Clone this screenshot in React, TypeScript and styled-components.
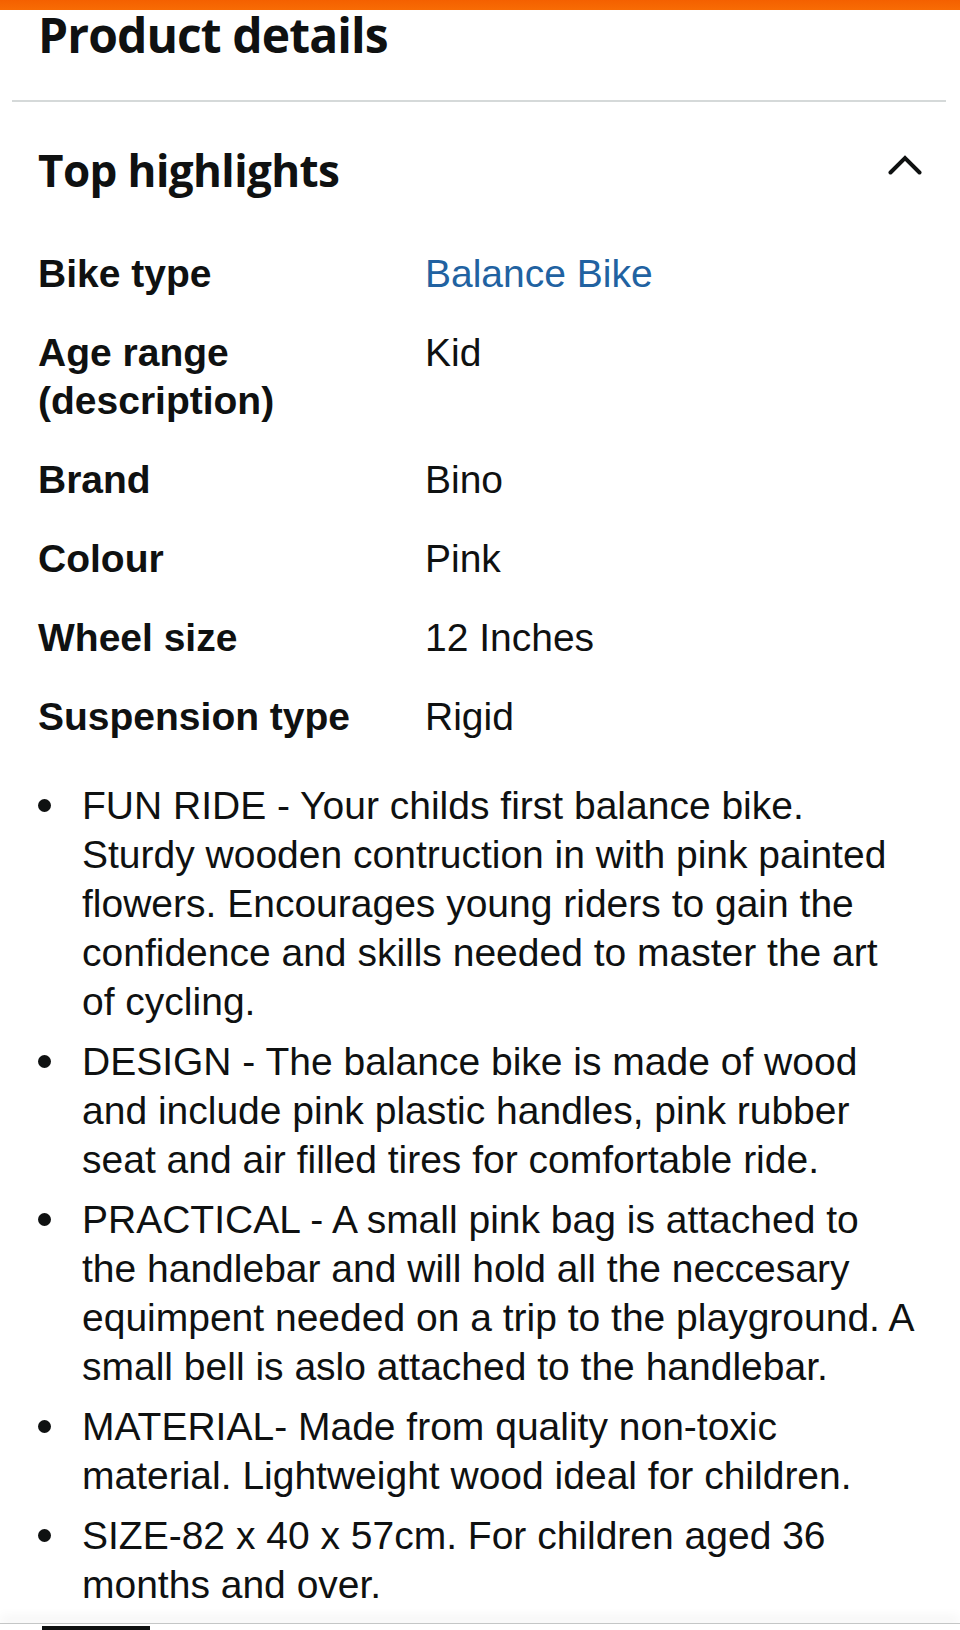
import React from "react";
import styled, { createGlobalStyle } from "styled-components";

const GlobalStyle = createGlobalStyle`
  html, body {
    margin: 0;
    padding: 0;
    background: #ffffff;
  }
  body {
    font-family: "Liberation Sans", Arial, sans-serif;
    color: #0f1111;
    -webkit-font-smoothing: antialiased;
  }
  * { box-sizing: border-box; }
`;

const Page = styled.div`
  width: 960px;
  min-height: 1630px;
  background: #fff;
  padding-bottom: 40px;
`;

const TopBar = styled.div`
  height: 10px;
  background: linear-gradient(#f46000, #f86c04);
`;

const Container = styled.div`
  padding: 0 12px;
`;

const Title = styled.h1`
  margin: 0;
  padding: 1px 26px 0;
  font-family: "Open Sans", "Noto Sans", sans-serif;
  font-weight: 700;
  font-size: 48px;
  line-height: 48px;
  letter-spacing: -0.9px;
  color: #0f1111;
`;

const Divider = styled.hr`
  margin: 41px 2px 0 0;
  border: none;
  height: 2px;
  background: #d5d9d9;
`;

const Section = styled.section`
  padding: 0 31px 0 26px;
`;

const SectionHeader = styled.div`
  margin-top: 40px;
  margin-right: -5px;
  display: flex;
  justify-content: space-between;
  align-items: flex-start;
`;

const SectionTitle = styled.h2`
  margin: 0;
  font-family: "Open Sans", "Noto Sans", sans-serif;
  font-weight: 700;
  font-size: 44px;
  line-height: 56px;
  letter-spacing: -0.6px;
  color: #0f1111;
`;

const Chevron = styled.svg`
  display: block;
  width: 34px;
  height: 20px;
  margin-top: 13px;
`;

const SpecTable = styled.dl`
  margin: 52px 0 0;
  display: grid;
  grid-template-columns: 387px 1fr;
  row-gap: 31px;
  font-size: 39px;
  line-height: 48px;
`;

const SpecLabel = styled.dt`
  margin: 0;
  font-weight: 700;
  color: #0f1111;
`;

const SpecValue = styled.dd<{ $link?: boolean }>`
  margin: 0;
  color: ${(p) => (p.$link ? "#2162a1" : "#0f1111")};
`;

const BulletList = styled.ul`
  list-style: none;
  margin: 40px 0 0;
  padding: 0;
  display: flex;
  flex-direction: column;
  gap: 11px;
`;

const BulletItem = styled.li`
  display: grid;
  grid-template-columns: 44px 1fr;
  font-size: 39px;
  line-height: 49px;
  color: #0f1111;
`;

const Dot = styled.span`
  width: 13px;
  height: 13px;
  margin-top: 18px;
  border-radius: 50%;
  background: #0f1111;
`;

const Footer = styled.div`
  position: fixed;
  left: 0;
  right: 0;
  bottom: 0;
  height: 7px;
  background: #fff;
  border-top: 1px solid #c4c6c6;
  box-shadow: 0 -6px 12px rgba(0, 0, 0, 0.06);
  display: flex;
  align-items: flex-end;
  padding-left: 42px;
`;

const FooterTab = styled.span`
  width: 108px;
  height: 4px;
  background: #0f1111;
`;

const specs: { label: string; value: string; link?: boolean }[] = [
  { label: "Bike type", value: "Balance Bike", link: true },
  { label: "Age range (description)", value: "Kid" },
  { label: "Brand", value: "Bino" },
  { label: "Colour", value: "Pink" },
  { label: "Wheel size", value: "12 Inches" },
  { label: "Suspension type", value: "Rigid" },
];

const bullets = [
  "FUN RIDE - Your childs first balance bike. Sturdy wooden contruction in with pink painted flowers. Encourages young riders to gain the confidence and skills needed to master the art of cycling.",
  "DESIGN - The balance bike is made of wood and include pink plastic handles, pink rubber seat and air filled tires for comfortable ride.",
  "PRACTICAL - A small pink bag is attached to the handlebar and will hold all the neccesary equimpent needed on a trip to the playground. A small bell is aslo attached to the handlebar.",
  "MATERIAL- Made from quality non-toxic material. Lightweight wood ideal for children.",
  "SIZE-82 x 40 x 57cm. For children aged 36 months and over.",
];

export default function App() {
  return (
    <Page>
      <GlobalStyle />
      <TopBar />
      <Container>
        <Title>Product details</Title>
        <Divider />
        <Section>
          <SectionHeader>
            <SectionTitle>Top highlights</SectionTitle>
            <Chevron viewBox="0 0 34 20" aria-hidden="true">
              <polyline
                points="2.5,17.5 17,3 31.5,17.5"
                fill="none"
                stroke="#0f1111"
                strokeWidth="4"
                strokeLinecap="round"
                strokeLinejoin="miter"
              />
            </Chevron>
          </SectionHeader>
          <SpecTable>
            {specs.map((s) => (
              <React.Fragment key={s.label}>
                <SpecLabel>
                  {s.label === "Age range (description)" ? (
                    <>
                      Age range
                      <br />
                      (description)
                    </>
                  ) : (
                    s.label
                  )}
                </SpecLabel>
                <SpecValue $link={s.link}>{s.value}</SpecValue>
              </React.Fragment>
            ))}
          </SpecTable>
          <BulletList>
            {bullets.map((b) => (
              <BulletItem key={b}>
                <Dot />
                <span>{b}</span>
              </BulletItem>
            ))}
          </BulletList>
        </Section>
      </Container>
      <Footer>
        <FooterTab />
      </Footer>
    </Page>
  );
}
